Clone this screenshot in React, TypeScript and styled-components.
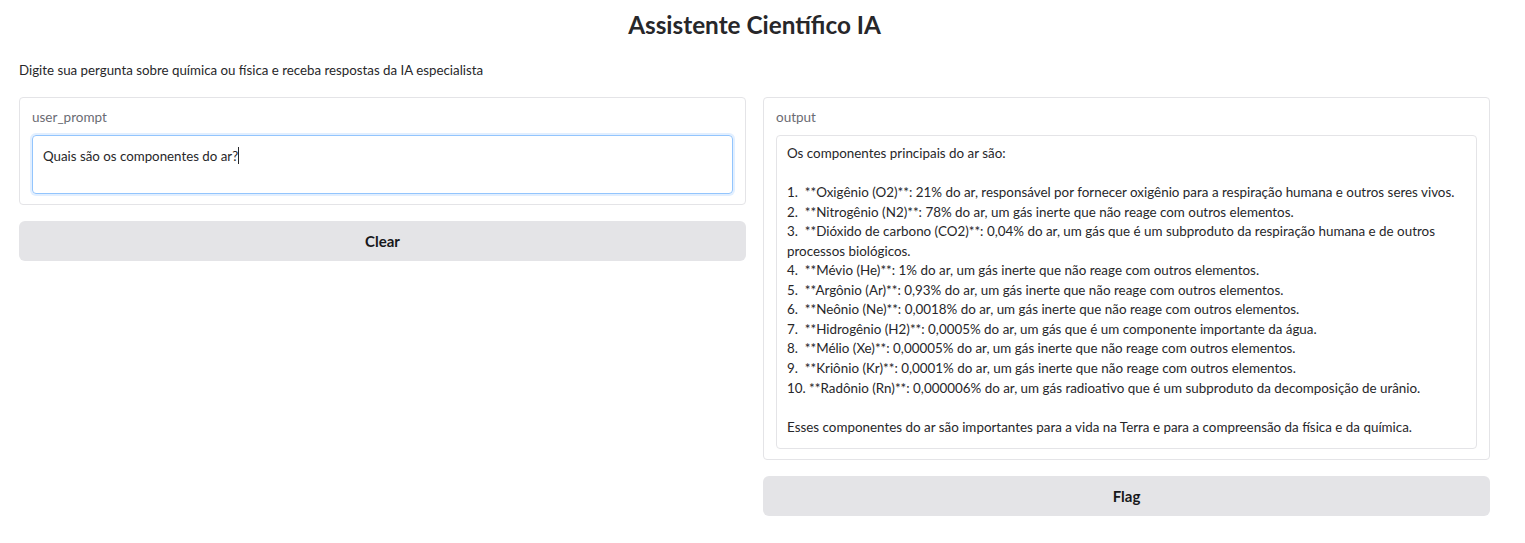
import React from "react";
import styled, { createGlobalStyle } from "styled-components";

const GlobalStyle = createGlobalStyle`
  html, body {
    margin: 0;
    padding: 0;
    background: #ffffff;
  }
  body {
    font-family: "Lato", "Noto Sans", "Liberation Sans", sans-serif;
    color: #27272a;
  }
`;

const outputText = `Os componentes principais do ar são:

1.  **Oxigênio (O2)**: 21% do ar, responsável por fornecer oxigênio para a respiração humana e outros seres vivos.
2.  **Nitrogênio (N2)**: 78% do ar, um gás inerte que não reage com outros elementos.
3.  **Dióxido de carbono (CO2)**: 0,04% do ar, um gás que é um subproduto da respiração humana e de outros processos biológicos.
4.  **Mévio (He)**: 1% do ar, um gás inerte que não reage com outros elementos.
5.  **Argônio (Ar)**: 0,93% do ar, um gás inerte que não reage com outros elementos.
6.  **Neônio (Ne)**: 0,0018% do ar, um gás inerte que não reage com outros elementos.
7.  **Hidrogênio (H2)**: 0,0005% do ar, um gás que é um componente importante da água.
8.  **Mélio (Xe)**: 0,00005% do ar, um gás inerte que não reage com outros elementos.
9.  **Kriônio (Kr)**: 0,0001% do ar, um gás inerte que não reage com outros elementos.
10. **Radônio (Rn)**: 0,000006% do ar, um gás radioativo que é um subproduto da decomposição de urânio.

Esses componentes do ar são importantes para a vida na Terra e para a compreensão da física e da química.`;

const App = () => {
  return (
    <Page>
      <GlobalStyle />
      <Title>Assistente Científico IA</Title>
      <Description>
        Digite sua pergunta sobre química ou física e receba respostas da IA especialista
      </Description>
      <Columns>
        <Column>
          <Panel>
            <Label>user_prompt</Label>
            <InputBox>Quais são os componentes do ar?<Caret /></InputBox>
          </Panel>
          <Button>Clear</Button>
        </Column>
        <Column>
          <Panel>
            <Label>output</Label>
            <OutputBox>{outputText}</OutputBox>
          </Panel>
          <Button>Flag</Button>
        </Column>
      </Columns>
    </Page>
  );
};
export default App;

const Page = styled.div`
  padding: 8px 35px 20px 19px;
  display: flex;
  flex-direction: column;
`;

const Title = styled.h1`
  margin: 0;
  text-align: center;
  font-size: 24.3px;
  font-weight: 700;
  line-height: 34px;
  color: #27272a;
`;

const Description = styled.p`
  margin: 19px 0 0;
  font-size: 13.3px;
  line-height: 18px;
  color: #27272a;
`;

const Columns = styled.div`
  display: grid;
  grid-template-columns: 1fr 1fr;
  gap: 17px;
  margin-top: 18px;
  align-items: start;
`;

const Column = styled.div`
  display: flex;
  flex-direction: column;
  gap: 16px;
`;

const Panel = styled.div`
  border: 1px solid #e4e4e7;
  border-radius: 4px;
  padding: 10px 12px 10px;
  display: flex;
  flex-direction: column;
  gap: 9px;
  background: #ffffff;
`;

const Label = styled.span`
  font-size: 13.5px;
  line-height: 18px;
  color: #6b6b73;
`;

const InputBox = styled.div`
  height: 59px;
  box-sizing: border-box;
  border: 1px solid #93c5fd;
  border-radius: 4px;
  box-shadow: 0 0 0 2px rgba(191, 219, 254, 0.45);
  padding: 10px 10px;
  font-size: 13.3px;
  line-height: 20px;
  color: #27272a;
`;

const Caret = styled.span`
  display: inline-block;
  width: 1px;
  height: 17px;
  background: #27272a;
  vertical-align: -3px;
`;

const OutputBox = styled.div`
  border: 1px solid #e4e4e7;
  border-radius: 4px;
  padding: 8px 10px 11px;
  font-size: 13.4px;
  line-height: 19.55px;
  white-space: pre-wrap;
  color: #27272a;
`;

const Button = styled.button`
  height: 40px;
  border: none;
  border-radius: 6px;
  background: #e4e4e7;
  font-family: inherit;
  font-size: 15px;
  font-weight: 700;
  color: #18181b;
`;
